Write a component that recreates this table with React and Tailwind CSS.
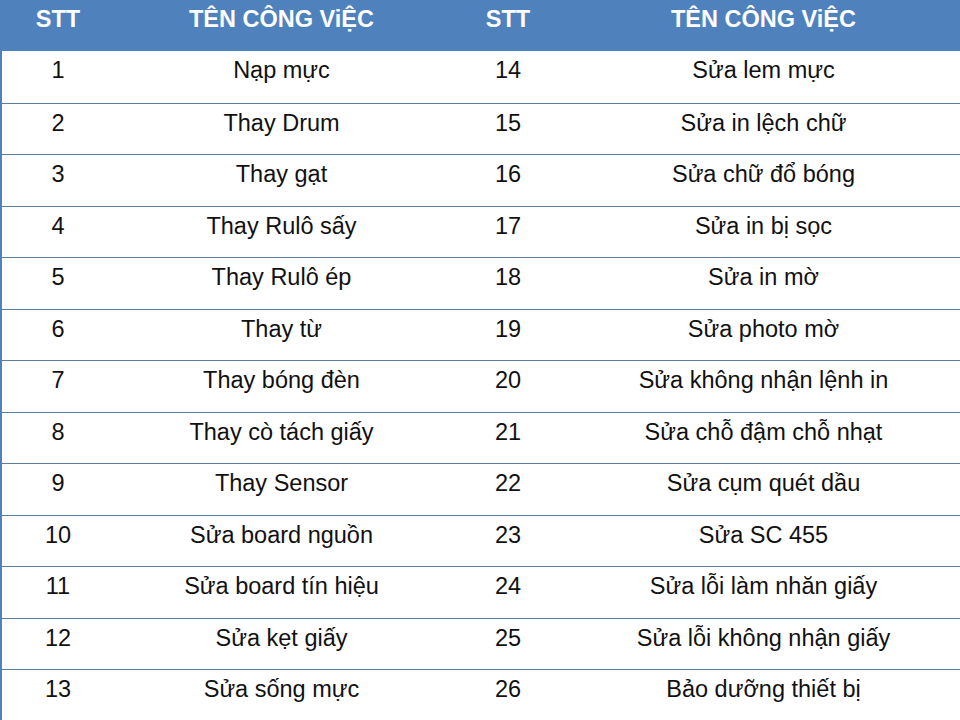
import React from 'react';

const rows = [
    [1, 'Nạp mực', 14, 'Sửa lem mực'],
    [2, 'Thay Drum', 15, 'Sửa in lệch chữ'],
    [3, 'Thay gạt', 16, 'Sửa chữ đổ bóng'],
    [4, 'Thay Rulô sấy', 17, 'Sửa in bị sọc'],
    [5, 'Thay Rulô ép', 18, 'Sửa in mờ'],
    [6, 'Thay từ', 19, 'Sửa photo mờ'],
    [7, 'Thay bóng đèn', 20, 'Sửa không nhận lệnh in'],
    [8, 'Thay cò tách giấy', 21, 'Sửa chỗ đậm chỗ nhạt'],
    [9, 'Thay Sensor', 22, 'Sửa cụm quét dầu'],
    [10, 'Sửa board nguồn', 23, 'Sửa SC 455'],
    [11, 'Sửa board tín hiệu', 24, 'Sửa lỗi làm nhăn giấy'],
    [12, 'Sửa kẹt giấy', 25, 'Sửa lỗi không nhận giấy'],
    [13, 'Sửa sống mực', 26, 'Bảo dưỡng thiết bị'],
];

const App = () => {
    return (
        <div
            className="w-[960px] h-[720px] overflow-hidden bg-white border-l-2 border-[#4f81bd] text-[23.5px] text-[#111]"
            style={{ fontFamily: '"Liberation Sans", Arial, sans-serif' }}
        >
            {/* header */}
            <div className="flex h-[51px] bg-[#4f81bd] text-white font-bold leading-none pt-[8px]">
                <div className="w-[112px] text-center">STT</div>
                <div className="w-[335px] text-center">TÊN CÔNG ViỆC</div>
                <div className="w-[118px] text-center">STT</div>
                <div className="flex-1 text-center">TÊN CÔNG ViỆC</div>
            </div>

            {rows.map((r, i) => (
                <div
                    key={i}
                    className={`flex h-[51.5px] leading-none pt-[8px] ${i > 0 ? 'border-t border-[#5e7d9c]' : ''}`}
                >
                    <div className="w-[112px] text-center">{r[0]}</div>
                    <div className="w-[335px] text-center">{r[1]}</div>
                    <div className="w-[118px] text-center">{r[2]}</div>
                    <div className="flex-1 text-center">{r[3]}</div>
                </div>
            ))}
        </div>
    );
};

export default App;
